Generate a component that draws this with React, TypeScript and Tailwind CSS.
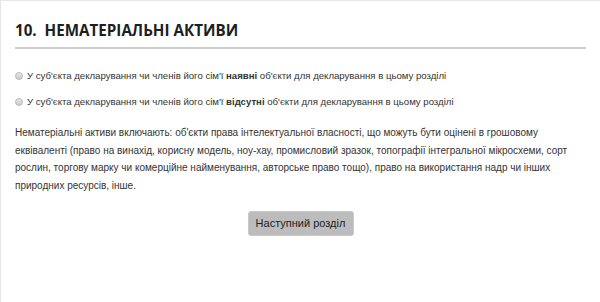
import React from 'react';

function Radio({ children }: { children: React.ReactNode }) {
  return (
    <label className="flex items-center gap-[4px] text-[9.6px] leading-[14px] text-[#333]">
      <span className="w-[8px] h-[8px] rounded-full border border-[#b8b8b8] bg-gradient-to-b from-[#e8e8e8] to-[#cacaca] shrink-0" />
      <span>{children}</span>
    </label>
  );
}

export default function App() {
  return (
    <div className="w-[600px] h-[302px] bg-white border-l border-t border-[#e6e6e6] px-[14px] font-['Liberation_Sans',Arial,sans-serif]">
      <h2 className="pt-[19px] pb-[7px] text-[15.2px] leading-[20px] font-bold text-[#1e1e1e] font-['Open_Sans',sans-serif] border-b-2 border-[#cfcfcf]">
        10.&nbsp;&nbsp;НЕМАТЕРІАЛЬНІ АКТИВИ
      </h2>
      <div className="mt-[20px] flex flex-col gap-[12px]">
        <Radio>У суб'єкта декларування чи членів його сім'ї <b>наявні</b> об'єкти для декларування в цьому розділі</Radio>
        <Radio>У суб'єкта декларування чи членів його сім'ї <b>відсутні</b> об'єкти для декларування в цьому розділі</Radio>
      </div>
      <p className="mt-[15px] text-[10px] leading-[17.7px] text-[#333] whitespace-nowrap">
        Нематеріальні активи включають: об'єкти права інтелектуальної власності, що можуть бути оцінені в грошовому<br />
        еквіваленті (право на винахід, корисну модель, ноу-хау, промисловий зразок, топографії інтегральної мікросхеми, сорт<br />
        рослин, торгову марку чи комерційне найменування, авторське право тощо), право на використання надр чи інших<br />
        природних ресурсів, інше.
      </p>
      <div className="flex justify-center mt-[16px]">
        <button className="w-[106px] h-[25px] rounded-[3px] bg-[#bcbcbc] text-[11px] text-[#222] border border-[#c8c8c8] whitespace-nowrap">
          Наступний розділ
        </button>
      </div>
    </div>
  );
}
